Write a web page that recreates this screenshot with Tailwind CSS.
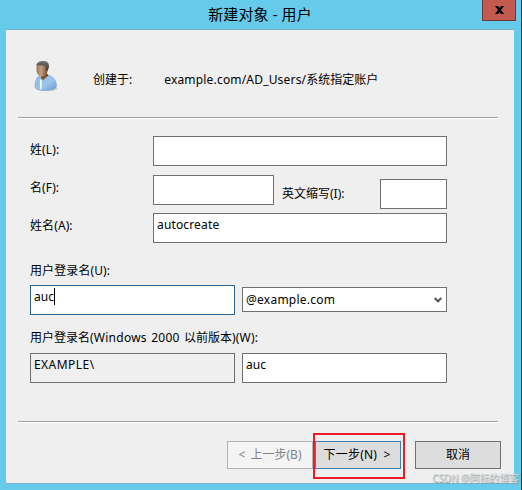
<!DOCTYPE html>
<html lang="zh-CN">
<head>
<meta charset="utf-8">
<title>新建对象 - 用户</title>
<script src="https://cdn.jsdelivr.net/npm/@tailwindcss/browser@4"></script>
</head>
<body class="w-[522px] h-[490px] overflow-hidden bg-[#66caea] font-['Noto_Sans','Noto_Sans_CJK_SC',sans-serif] text-[12px] leading-4 text-black whitespace-nowrap">
<div class="relative w-[522px] h-[490px] flex flex-col px-[6px] border-r border-[#283c46]">
  <header class="h-[29px] shrink-0 flex justify-center pt-[4px]">
    <h1 class="text-[15px] leading-5 tracking-[.1px] -ml-px">新建对象 - 用户</h1>
    <button class="absolute right-[5px] top-0 w-[34px] h-[21px] bg-[#c35a50] border border-t-0 border-[#6d3733] flex items-center justify-center">
      <svg class="w-[9px] h-[8px]" viewBox="0 0 9 8"><path d="M0 0h3l1.500 2L6 0h3L6 4l3 4H6L4.500 6 3 8H0l3-4z"/></svg>
    </button>
  </header>
  <main class="w-[508px] h-[455px] shrink-0 flex flex-col bg-[#efefef] border-y border-y-[#77b3ca] px-[12px]">
    <section class="h-[87px] shrink-0 flex items-start">
      <svg class="w-[24px] h-[32px] ml-[16px] mt-[30px] shrink-0" viewBox="0 0 24 32">
        <defs>
          <linearGradient id="shirt" x1="0" y1="0" x2="1" y2="1"><stop offset="0" stop-color="#8fb8df"/><stop offset=".55" stop-color="#9cc6ee"/><stop offset="1" stop-color="#6c9bcb"/></linearGradient>
          <linearGradient id="skin" x1="0" y1="0" x2="1" y2="0"><stop offset="0" stop-color="#9b7358"/><stop offset=".4" stop-color="#c6a07f"/><stop offset="1" stop-color="#74441e"/></linearGradient>
          <linearGradient id="hair" x1="0" y1="0" x2="0" y2="1"><stop offset="0" stop-color="#757575"/><stop offset="1" stop-color="#353535"/></linearGradient>
        </defs>
        <ellipse cx="13" cy="28.500" rx="10.500" ry="2.300" fill="#c9c9c7"/>
        <path d="M1 27c0-5 1-9 4-11l9-1c5 1 8.500 6 8.500 10.500 0 3.500-5 5-10.500 5C6 30.500 1 29.500 1 27z" fill="url(#shirt)" stroke="#7299c0" stroke-width=".5"/>
        <path d="M6 19l2 2-.5 8.500-1.500-.5z" fill="#f7f8fa"/>
        <path d="M7 14h7v2c-2 1-3 3-5 4l-2-2z" fill="#80502b"/>
        <path d="M2.500 4.500c3-1 7-1 10.500 0l1 4-1 5c-2 2-4 3.500-6 3-2-.5-4.500-3-4.500-6z" fill="url(#skin)"/>
        <path d="M2.500 5C3 2 6 1 9 1c4 0 6 2 6 5 0 2-1 4-2 5l-1-1V6C9 5.500 6 6 2.500 5z" fill="url(#hair)"/>
      </svg>
      <span class="ml-[35px] mt-[42px]">创建于:</span>
      <span class="ml-[32px] mt-[42px]"><span class="tracking-[.18px]">example.com/AD_Users/</span>系统指定账户</span>
    </section>
    <div class="w-[480px] h-[2px] shrink-0 bg-white border-t border-[#a0a0a0]"></div>
    <section class="pl-[12px] pt-[17px] h-[302px] shrink-0 flex flex-col">
      <div class="flex h-[39px] shrink-0"><label class="w-[123px] pt-[6px] tracking-[.1px]">姓(L):</label><div class="w-[294px] h-[30px] bg-white border border-[#707070]"></div></div>
      <div class="flex h-[38px] shrink-0"><label class="w-[123px] pt-[5px] tracking-[.1px]">名(F):</label><div class="w-[121px] h-[30px] bg-white border border-[#707070]"></div><label class="w-[106px] pl-[8px] pt-[11px]">英文缩写(I):</label><div class="w-[67px] h-[30px] mt-[4px] bg-white border border-[#707070]"></div></div>
      <div class="flex h-[50px] shrink-0"><label class="w-[123px] pt-[5px] tracking-[.1px]">姓名(A):</label><div class="w-[294px] h-[30px] bg-white border border-[#707070] pl-[3px] pt-[3px] tracking-[.15px]">autocreate</div></div>
      <label class="h-[22px] shrink-0 tracking-[.1px]">用户登录名(U):</label>
      <div class="flex gap-[7px] h-[45px] shrink-0">
        <div class="w-[205px] h-[30px] bg-white border border-[#276494] pl-[3px] pt-[3px] flex"><span>auc</span><i class="w-px h-[17px] bg-black -mt-px"></i></div>
        <div class="w-[205px] h-[25px] mt-[2px] bg-white border border-[#707070] pl-[3px] pr-[4px] flex items-center justify-between"><span class="tracking-[.25px]">@example.com</span><svg class="w-[8px] h-[6px]" viewBox="0 0 8 6"><path d="M.7 1L4 4.300 7.300 1" fill="none" stroke="#555" stroke-width="2"/></svg></div>
      </div>
      <label class="h-[23px] shrink-0">用户登录名<span class="tracking-[.25px] [word-spacing:1px]">(Windows 2000 </span>以前版本<span class="tracking-[.15px]">)(W):</span></label>
      <div class="flex gap-[7px] shrink-0"><div class="w-[205px] h-[30px] border border-[#707070] pl-[3px] pt-[3px] tracking-[.45px]">EXAMPLE\</div><div class="w-[205px] h-[30px] bg-white border border-[#707070] pl-[3px] pt-[3px]">auc</div></div>
    </section>
    <div class="w-[480px] h-[2px] shrink-0 bg-white border-t border-[#a0a0a0]"></div>
    <footer class="flex pl-[209px] pt-[18px]">
      <button class="w-[86px] h-[28px] border border-[#adb2b5] bg-[#f4f4f4] text-[#838383] [word-spacing:2px]">&lt; 上一步(B)</button>
      <button class="relative ml-[2px] w-[86px] h-[28px] border border-[#3c7fb1] bg-[#dddddd] tracking-[.2px] [word-spacing:3px] pr-[2px]">下一步(N) &gt;<i class="absolute -left-[3px] -top-[9px] w-[92px] h-[46px] border-2 border-[#ed1c24]"></i></button>
      <button class="ml-[14px] w-[86px] h-[28px] border border-[#707070] bg-[#dddddd]">取消</button>
    </footer>
  </main>
  <span class="absolute left-[432px] top-[470px] text-[10px] tracking-[-.15px] text-[#d5dbde] [text-shadow:1px_1px_1px_#8b9699]">CSDN @阿标的博客</span>
</div>
</body>
</html>
